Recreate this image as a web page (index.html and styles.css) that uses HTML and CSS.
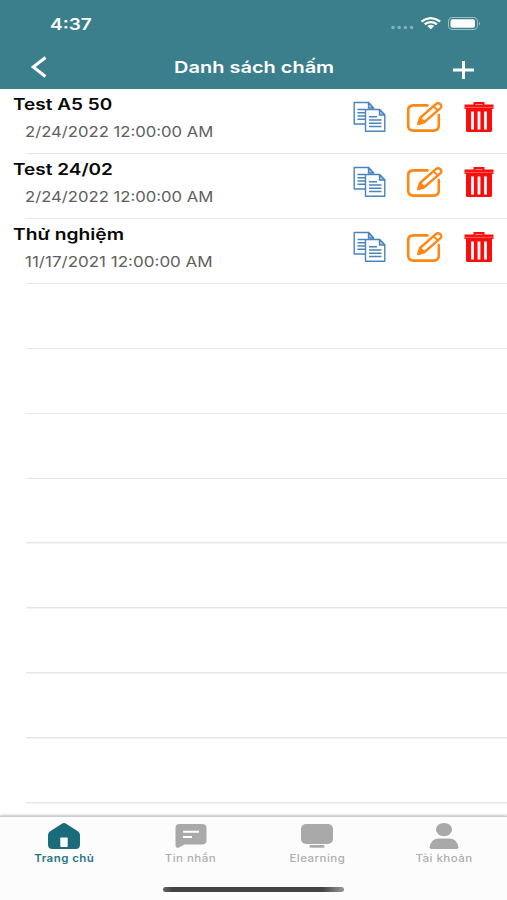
FILE: index.html
```html
<!DOCTYPE html>
<html lang="vi">
<head>
<meta charset="utf-8">
<title>Danh sách chấm</title>
<link rel="stylesheet" href="styles.css">
</head>
<body>
<svg class="defs" aria-hidden="true">
  <symbol id="copy" viewBox="0 0 33 32">
    <g fill="#fff" stroke="#4a84bd" stroke-width="1.4" stroke-linejoin="round">
      <path d="M1.200 1.500H15.500L20.500 7V23H1.200Z"/>
      <path d="M15.500 1.500V7H20.500Z" fill="#a9c8e6"/>
      <path d="M4.500 8.500H12M4.500 11.800H12M4.500 15H12M4.500 18.200H12"/>
      <path d="M12.500 8.500H26.500L31.800 14V30.200H12.500Z"/>
      <path d="M26.500 8.500V14H31.800Z" fill="#a9c8e6"/>
      <path d="M16 15.700H24M16 19H28.500M16 22.300H28.500M16 25.500H28.500"/>
    </g>
  </symbol>
  <symbol id="edit" viewBox="0 0 37 32">
    <g fill="none" stroke="#ff8712" stroke-width="2.600" stroke-linecap="round" stroke-linejoin="round">
      <path d="M21.500 4.400H7.500Q2.200 4.400 2.200 9.500V24.500Q2.200 29.600 7.500 29.600H27.500Q32.800 29.600 32.800 24.500V14"/>
      <path d="M12.200 23L14 17L29.800 3.200Q32 1.400 34.300 3.100Q36.500 5.200 34.300 7.300L18.500 21Z" stroke-width="2.400"/>
      <path d="M27.500 5.500L32 9.500M14 17L18.500 21" stroke-width="1.700"/>
      <path d="M12.200 23L14 17L18.500 21Z" fill="#ff8712" stroke-width="1"/>
    </g>
  </symbol>
  <symbol id="trash" viewBox="0 0 30 32">
    <path d="M10.500 4V2H19.500V4" fill="none" stroke="#fb0d0d" stroke-width="2"/>
    <path d="M.5 3.500H29.500V8H.5Z" fill="#fb0d0d"/>
    <path d="M2 8H28V29.500Q28 31 26.500 31H3.500Q2 31 2 29.500Z" fill="#fb0d0d"/>
    <path d="M1 6.400H29" stroke="#ff7474" stroke-width=".8"/>
    <path d="M8.500 10.500V28.500M15 10.500V28.500M21.500 10.500V28.500" stroke="#fff" stroke-width="2.800"/>
  </symbol>
</svg>
<div class="phone">
  <header class="top">
    <div class="status">
      <span class="time">4:37</span>
      <svg class="signals" width="92" height="18" viewBox="0 0 92 18">
        <g fill="#82b1b9"><circle cx="4" cy="12.500" r="1.800"/><circle cx="10.200" cy="12.500" r="1.800"/><circle cx="16.400" cy="12.500" r="1.800"/><circle cx="22.600" cy="12.500" r="1.800"/></g>
        <g fill="none" stroke="#fff" stroke-width="2.300"><path d="M32.500 6.500Q41.800 -.1 51.100 6.500"/><path d="M35.700 9.300Q41.800 4.900 47.900 9.300"/></g>
        <path d="M38.300 11Q41.800 8.600 45.300 11L41.800 14.300Z" fill="#fff"/>
        <rect x="59.500" y="2.500" width="29" height="12" rx="3.500" fill="none" stroke="#9cc0c6"/>
        <rect x="61.500" y="4.300" width="24.500" height="8.500" rx="2" fill="#fff"/>
        <path d="M90 6.500Q92 8.500 90 10.500Z" fill="#a7c8cd"/>
      </svg>
    </div>
    <div class="bar">
      <svg class="back" width="20" height="24" viewBox="0 0 20 24"><path d="M16.500 2.500L4.200 12L16.500 21.500" fill="none" stroke="#fff" stroke-width="3"/></svg>
      <h1 class="title">Danh sách chấm</h1>
      <svg class="add" width="22" height="20" viewBox="0 0 22 20"><path d="M0 10H21M10.500 1V19" stroke="#fff" stroke-width="3"/></svg>
    </div>
  </header>
  <main class="list">
    <div class="row">
      <div class="info"><span class="name">Test A5 50</span><span class="date">2/24/2022 12:00:00 AM</span></div>
      <div class="actions"><svg class="copy"><use href="#copy"/></svg><svg class="edit"><use href="#edit"/></svg><svg class="trash"><use href="#trash"/></svg></div>
    </div>
    <div class="row">
      <div class="info"><span class="name">Test 24/02</span><span class="date">2/24/2022 12:00:00 AM</span></div>
      <div class="actions"><svg class="copy"><use href="#copy"/></svg><svg class="edit"><use href="#edit"/></svg><svg class="trash"><use href="#trash"/></svg></div>
    </div>
    <div class="row">
      <div class="info"><span class="name wide">Thử nghiệm</span><span class="date wide">11/17/2021 12:00:00 AM</span></div>
      <div class="actions"><svg class="copy"><use href="#copy"/></svg><svg class="edit"><use href="#edit"/></svg><svg class="trash"><use href="#trash"/></svg></div>
    </div>
    <div class="row"></div><div class="row"></div><div class="row"></div><div class="row"></div>
    <div class="row"></div><div class="row"></div><div class="row"></div><div class="row"></div>
  </main>
  <footer class="bottom">
    <nav class="tabs">
      <a class="tab active">
        <svg width="34" height="28" viewBox="0 0 34 28"><path d="M14.500 2Q17 .2 19.500 2L30.500 9Q33 10.500 33 13V22.500Q33 27 28.500 27H5.500Q1 27 1 22.500V13Q1 10.500 3.500 9Z" fill="#1a6b7b"/><rect x="13.300" y="15.500" width="7.400" height="9.500" rx=".8" fill="#fff"/></svg>
        <span class="label">Trang chủ</span>
      </a>
      <a class="tab">
        <svg width="34" height="28" viewBox="0 0 34 28"><path d="M5.500 2H28Q32.500 2 32.500 6V18.500Q32.500 22.500 28 22.500H10.500L4.500 25.700Q1.500 26.500 1.500 23.500V6Q1.500 2 5.500 2Z" fill="#a9a9a9"/><path d="M9 9.800H25M9 15H18" stroke="#fff" stroke-width="2"/></svg>
        <span class="label">Tin nhắn</span>
      </a>
      <a class="tab">
        <svg width="34" height="28" viewBox="0 0 34 28"><rect x="1" y="2" width="32" height="20" rx="5" fill="#a9a9a9"/><rect x="9.500" y="23" width="15" height="2.800" rx="1" fill="#a9a9a9"/></svg>
        <span class="label">Elearning</span>
      </a>
      <a class="tab">
        <svg width="34" height="28" viewBox="0 0 34 28"><ellipse cx="17" cy="7.600" rx="8" ry="6.700" fill="#a9a9a9"/><path d="M2.500 25.500Q4 16.500 12 16.500H22Q30 16.500 31.500 25.500Q31.500 27 29 27H5Q2.500 27 2.500 25.500Z" fill="#a9a9a9"/></svg>
        <span class="label">Tài khoản</span>
      </a>
    </nav>
    <div class="home"></div>
  </footer>
</div>
</body>
</html>
```

FILE: styles.css
```css
* { box-sizing: border-box; }
body { margin: 0; font-family: Inter, "Liberation Sans", sans-serif; background: #fff; }
.defs { display: block; width: 0; height: 0; }
.phone { width: 507px; height: 900px; display: flex; flex-direction: column; overflow: hidden; }
.top { height: 89.400px; flex: none; background: #3a7f8b; color: #fff; }
.status { height: 45px; padding: 14px 26px 0 50px; display: flex; justify-content: space-between; }
.signals { margin-top: 1px; }
.time { font-size: 16px; line-height: 20px; font-weight: 600; transform: scaleX(1.19); transform-origin: 0 50%; }
.bar { height: 43px; padding: 0 32px 0 29px; display: flex; align-items: center; justify-content: space-between; }
.title { margin: 0 0 0 6px; font-size: 16.500px; line-height: 22px; font-weight: 600; transform: scaleX(1.21); }
.add { margin-top: 6px; }
.list { flex: 1; min-height: 0; overflow: hidden; }
.row { height: 64.950px; padding: 0 13px 0 13px; display: flex; justify-content: space-between; background: linear-gradient(#e6e6e6, #e6e6e6) 26px 100% / 100% 1.500px no-repeat; }
.info { display: flex; flex-direction: column; align-items: flex-start; padding-top: 5.600px; white-space: nowrap; }
.name { font-size: 15.500px; line-height: 20px; font-weight: 600; color: #080808; transform: scaleX(1.225); transform-origin: 0 50%; }
.name.wide { transform: scaleX(1.24); }
.date { margin: 8.300px 0 0 12px; font-size: 14px; line-height: 18px; color: #606060; transform: scaleX(1.19); transform-origin: 0 50%; }
.date.wide { transform: scaleX(1.215); }
.actions { display: flex; padding-top: 11.500px; }
.copy { width: 33px; height: 32px; margin-right: 20px; }
.edit { width: 37px; height: 32px; margin-right: 21px; }
.trash { width: 30px; height: 32px; }
.bottom { height: 84px; flex: none; display: flex; flex-direction: column; align-items: center; background: #fcfcfc; border-top: 1px solid #d0d0d0; box-shadow: 0 -1px 2px #c8c8c8; }
.tabs { width: 507px; height: 70px; padding: 5px 0 0 1px; display: grid; grid-template-columns: repeat(4, 126.500px); }
.tab { display: flex; flex-direction: column; align-items: center; color: #afafaf; }
.label { margin-top: 2px; font-size: 10.500px; line-height: 14px; font-weight: 500; letter-spacing: .4px; transform: scaleX(1.1); white-space: nowrap; }
.active { color: #287684; }
.active .label { font-weight: 600; }
.home { width: 181px; height: 5px; margin-top: 0; border-radius: 3px; background: linear-gradient(90deg, #666, #444 5%, #444 88%, #999); }
```
